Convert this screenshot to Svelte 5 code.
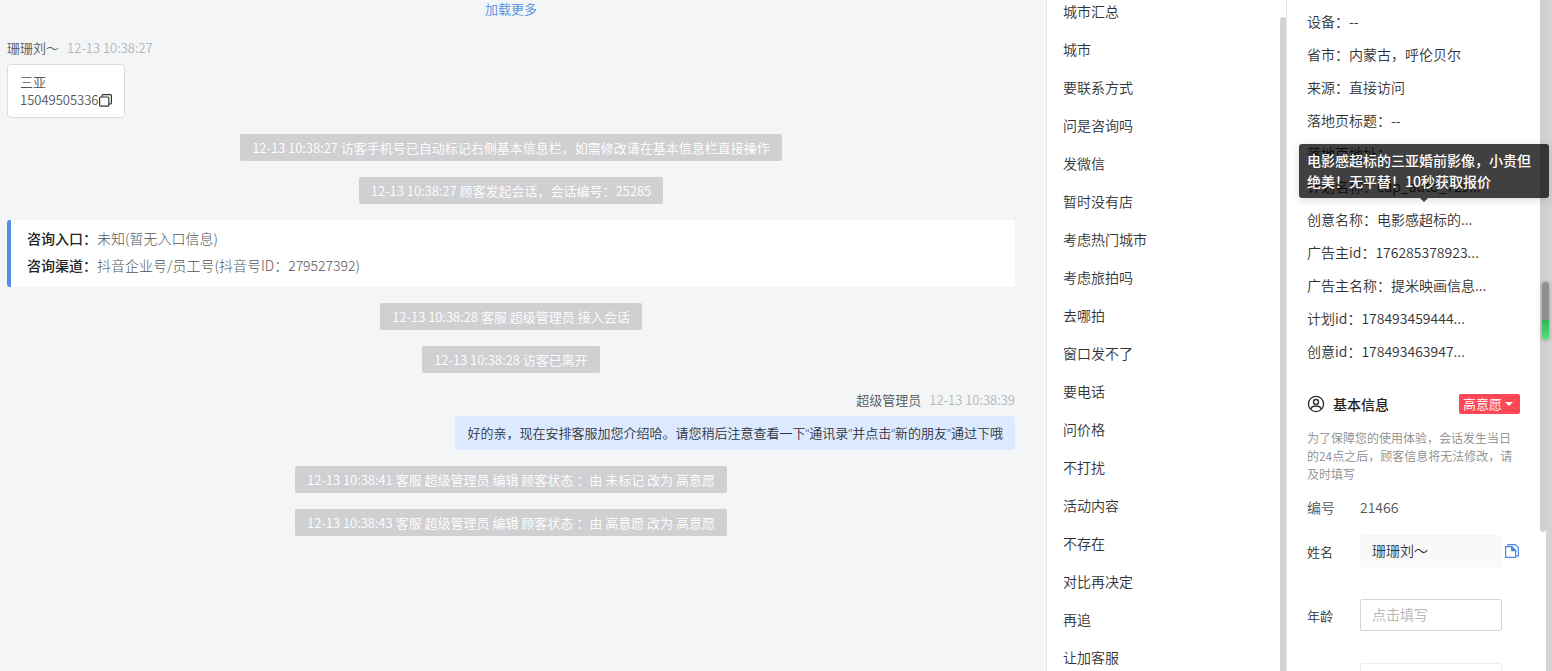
<script>
  const quickReplies = [
    "城市汇总",
    "城市",
    "要联系方式",
    "问是咨询吗",
    "发微信",
    "暂时没有店",
    "考虑热门城市",
    "考虑旅拍吗",
    "去哪拍",
    "窗口发不了",
    "要电话",
    "问价格",
    "不打扰",
    "活动内容",
    "不存在",
    "对比再决定",
    "再追",
    "让加客服",
  ];

  const timeline = [
    { type: "message", name: "珊珊刘～", time: "12-13 10:38:27", lines: ["三亚", "15049505336"] },
    { type: "system", text: "12-13 10:38:27 访客手机号已自动标记右侧基本信息栏，如需修改请在基本信息栏直接操作" },
    { type: "system", text: "12-13 10:38:27 顾客发起会话，会话编号：25285" },
    {
      type: "entry",
      rows: [
        { label: "咨询入口：", value: "未知(暂无入口信息)" },
        { label: "咨询渠道：", value: "抖音企业号/员工号(抖音号ID：279527392)" },
      ],
    },
    { type: "system", text: "12-13 10:38:28 客服 超级管理员 接入会话" },
    { type: "system", text: "12-13 10:38:28 访客已离开" },
    {
      type: "reply",
      name: "超级管理员",
      time: "12-13 10:38:39",
      text: "好的亲，现在安排客服加您介绍哈。请您稍后注意查看一下“通讯录”并点击“新的朋友”通过下哦",
    },
    { type: "system", text: "12-13 10:38:41 客服 超级管理员 编辑 顾客状态 ：由 未标记 改为 高意愿" },
    { type: "system", text: "12-13 10:38:43 客服 超级管理员 编辑 顾客状态 ：由 高意愿 改为 高意愿" },
  ];

  const visitInfo = [
    { label: "设备", value: "--" },
    { label: "省市", value: "内蒙古，呼伦贝尔" },
    { label: "来源", value: "直接访问" },
    { label: "落地页标题", value: "--" },
    { label: "落地页地址", value: "" },
    { label: "计划名称", value: "cdp_auto_729..." },
    {
      label: "创意名称",
      value: "电影感超标的...",
      tip: "电影感超标的三亚婚前影像，小贵但绝美！无平替！10秒获取报价",
    },
    { label: "广告主id", value: "176285378923..." },
    { label: "广告主名称", value: "提米映画信息..." },
    { label: "计划id", value: "178493459444..." },
    { label: "创意id", value: "178493463947..." },
  ];

  let name = "珊珊刘～";
  let age = "";
  let extra = "";
</script>

<div class="workspace">
  <main class="chat">
    <button class="load-more">加载更多</button>

    {#each timeline as item}
      {#if item.type === "system"}
        <div class="system">{item.text}</div>
      {:else if item.type === "entry"}
        <div class="entry">
          {#each item.rows as row}
            <div><strong>{row.label}</strong>{row.value}</div>
          {/each}
        </div>
      {:else if item.type === "message"}
        <div class="message">
          <div class="meta">
            <span>{item.name}</span><time>{item.time}</time>
          </div>
          <div class="bubble">
            <div>{item.lines[0]}</div>
            <div class="phone">
              {item.lines[1]}<button class="icon-btn" aria-label="复制手机号">
                <svg width="13" height="13" viewBox="0 0 13 13" fill="none" stroke="#333" stroke-width="1.2">
                  <rect x="0.6" y="3" width="9.2" height="9.2" rx="1" />
                  <path d="M3 3V1.6a1 1 0 0 1 1-1h7.4a1 1 0 0 1 1 1V9a1 1 0 0 1-1 1H9.8" />
                </svg>
              </button>
            </div>
          </div>
        </div>
      {:else}
        <div class="message mine">
          <div class="meta">
            <span>{item.name}</span><time>{item.time}</time>
          </div>
          <div class="bubble">{item.text}</div>
        </div>
      {/if}
    {/each}
  </main>

  <nav class="replies">
    <ul>
      {#each quickReplies as reply}
        <li><button>{reply}</button></li>
      {/each}
    </ul>
    <div class="list-thumb"></div>
  </nav>

  <aside class="side">
    <div class="detail">
      <div class="visit">
        {#each visitInfo as info}
          <div class="visit-row">
            {info.label}：{info.value}
            {#if info.tip}
              <div class="tooltip" role="tooltip">{info.tip}</div>
            {/if}
          </div>
        {/each}
      </div>

      <div class="section-head">
        <svg width="18" height="18" viewBox="0 0 18 18" fill="none" stroke="#333" stroke-width="1.4">
          <circle cx="9" cy="9" r="7.6" />
          <circle cx="9" cy="7" r="2.5" />
          <path d="M3.8 14.2c.6-2 2-2.900 3.600-2.900h3.200c1.600 0 3 .9 3.600 2.900" />
        </svg>
        <h3>基本信息</h3>
        <button class="status">高意愿<i></i></button>
      </div>
      <p class="note">为了保障您的使用体验，会话发生当日的24点之后，顾客信息将无法修改，请及时填写</p>

      <div class="number"><span>编号</span><span>21466</span></div>
      <div class="field">
        <label for="name">姓名</label>
        <input id="name" class="filled" bind:value={name} />
        <button class="icon-btn" aria-label="复制姓名">
          <svg width="14" height="14" viewBox="0 0 14 14" fill="none" stroke="#4a86e8" stroke-width="1.2">
            <path d="M3 2V.6h7.200L13.400 3.600V12H11" />
            <path d="M.6 2.600H6.800L10.600 6.400V13.400H.6z" />
            <path d="M6.600 2.600V6.600H10.600z" fill="#4a86e8" />
          </svg>
        </button>
      </div>
      <div class="field">
        <label for="age">年龄</label>
        <input id="age" placeholder="点击填写" bind:value={age} />
      </div>
      <div class="field">
        <input class="faint" aria-label="备注" bind:value={extra} />
      </div>
    </div>
    <div class="inner-bar"></div>
    <div class="outer-bar"></div>
    <div class="meter"></div>
  </aside>
</div>

<style>
  :global(body) {
    margin: 0;
    font-family: "Noto Sans CJK SC", sans-serif;
    font-size: 13px;
    font-weight: 350;
    color: #333;
  }

  button {
    padding: 0;
    border: none;
    background: none;
    font: inherit;
    color: inherit;
    cursor: pointer;
  }

  .workspace {
    display: flex;
    height: 100vh;
    overflow: hidden;
    background: #f4f5f7;
  }

  .chat {
    flex: 1;
    display: flex;
    flex-direction: column;
    align-items: center;
    gap: 16px;
    padding: 0 31px 0 7px;
    line-height: 18px;
  }

  .load-more {
    margin-bottom: 3px;
    color: #4a90e2;
  }

  .system {
    padding: 5px 12px 4px;
    border-radius: 2px;
    background: #d0d0d2;
    color: #fff;
  }

  .entry {
    align-self: stretch;
    padding: 5px 16px 8px;
    border-left: 4px solid #4f8fe6;
    border-radius: 3px;
    background: #fff;
    color: #555;
    font-size: 14px;
    font-weight: 300;
    line-height: 27px;
  }

  .entry strong {
    color: #222;
    font-weight: 500;
  }

  .message {
    display: flex;
    flex-direction: column;
    align-items: flex-start;
    align-self: flex-start;
    gap: 7px;
    padding-top: 2px;
    color: #555;
  }

  .meta {
    display: flex;
    gap: 8px;
  }

  .meta time {
    color: #b5b5b5;
  }

  .bubble {
    padding: 8px 12px;
    border: 1px solid #dcdcde;
    border-radius: 4px;
    background: #fff;
  }

  .phone {
    display: flex;
    align-items: center;
  }

  .icon-btn {
    display: flex;
  }

  .mine {
    align-self: flex-end;
    align-items: flex-end;
  }

  .mine .bubble {
    border: none;
    background: #dce9fe;
    color: #2c3340;
    font-family: "Open Sans", "Noto Sans CJK SC", sans-serif;
  }

  .replies {
    position: relative;
    width: 239px;
    overflow: hidden;
    border: solid #e6e6e8;
    border-width: 0 1px;
    background: #fff;
    font-size: 14px;
  }

  /* list is scrolled a little past its first row */
  .replies ul {
    margin: -8px 0 0;
    padding: 0;
    list-style: none;
  }

  .replies button {
    display: block;
    width: 100%;
    padding: 0 16px;
    text-align: left;
    line-height: 38px;
  }

  .list-thumb {
    position: absolute;
    top: 17px;
    right: 0;
    bottom: 0;
    width: 6px;
    border-radius: 3px 3px 0 0;
    background: #d3d3d3;
  }

  .side {
    position: relative;
    display: flex;
    width: 265px;
    background: #fff;
  }

  .detail {
    flex: 1;
    padding: 5px 20px 0;
    font-size: 14px;
  }

  .visit-row {
    position: relative;
    line-height: 33px;
    white-space: nowrap;
  }

  .tooltip {
    position: absolute;
    bottom: calc(100% + 5px);
    left: -8px;
    z-index: 5;
    box-sizing: border-box;
    width: 250px;
    padding: 6px 8px;
    border-radius: 3px;
    background: rgba(0, 0, 0, 0.75);
    box-shadow: 0 2px 8px rgba(0, 0, 0, 0.15);
    color: #fff;
    font-weight: 500;
    line-height: 21px;
    white-space: normal;
  }

  .tooltip::after {
    content: "";
    position: absolute;
    top: 100%;
    left: 50%;
    margin-left: -4px;
    border: 4px solid transparent;
    border-top-color: #404040;
    border-bottom: none;
  }

  .section-head {
    display: flex;
    align-items: center;
    margin-top: 26px;
  }

  .section-head h3 {
    flex: 1;
    margin: 0 0 0 8px;
    color: #222;
    font-size: 14px;
    font-weight: 500;
    line-height: 20px;
  }

  .status {
    display: flex;
    align-items: center;
    gap: 3px;
    padding: 0 7px 0 4px;
    border-radius: 2px;
    background: #ff4757;
    color: #fff;
    font-size: 13px;
    line-height: 20px;
  }

  .status i {
    border: 4px solid transparent;
    border-top-color: #fff;
    border-bottom: none;
  }

  .note {
    margin: 15px 0 12px;
    color: #8c8c8c;
    font-size: 12px;
    line-height: 18px;
  }

  .number {
    display: flex;
    margin-bottom: 16px;
    color: #555;
    line-height: 24px;
  }

  .number span:first-child {
    width: 53px;
  }

  .field {
    display: flex;
    align-items: center;
    margin-bottom: 32px;
  }

  .field label {
    width: 53px;
    font-size: 13px;
  }

  .field input {
    box-sizing: border-box;
    width: 142px;
    height: 32px;
    margin-right: 3px;
    padding: 0 11px 2px;
    border: 1px solid #d4d4d6;
    border-radius: 2px;
    background: #fff;
    color: #333;
    font: inherit;
  }

  .field input::placeholder {
    color: #b5b5b5;
  }

  .field input.filled {
    border-color: #f7f7f7;
    background: #f9f9f9;
  }

  .field input.faint {
    margin-left: 53px;
    border-color: #eee;
  }

  .inner-bar {
    width: 6px;
    height: 532px;
    border-radius: 0 0 3px 3px;
    background: #d0d0d0;
  }

  .outer-bar {
    width: 6px;
    background: #d3d3d3;
  }

  .meter {
    position: absolute;
    top: 282px;
    right: 3px;
    width: 7px;
    height: 58px;
    border-radius: 4px;
    background: linear-gradient(#8f8f8f 0 66%, #2fb457 66%, #5fe080);
    box-shadow: 0 0 4px rgba(0, 0, 0, 0.3);
  }
</style>
